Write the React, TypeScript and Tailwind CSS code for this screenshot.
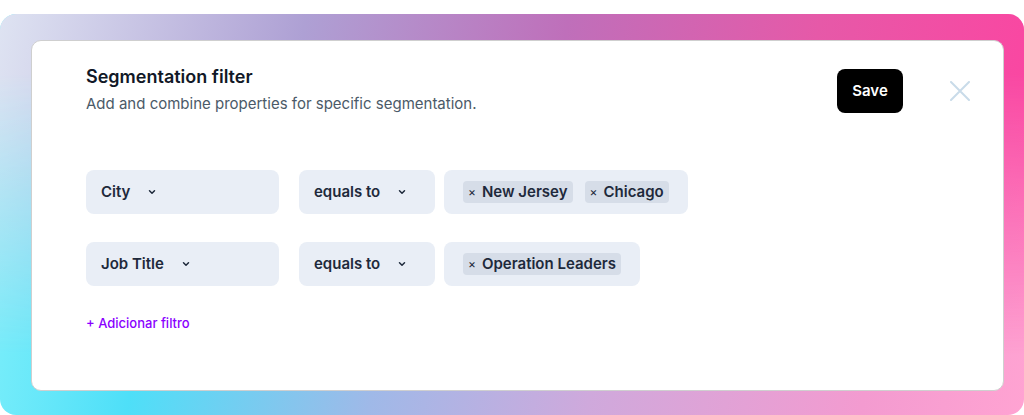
import React from "react";

const rows = [
  { field: "City", op: "equals to", values: ["New Jersey", "Chicago"] },
  { field: "Job Title", op: "equals to", values: ["Operation Leaders"] },
];

const Chevron = () => (
  <svg width="10" height="10" viewBox="0 0 10 10" fill="none" className="shrink-0">
    <path d="M2.5 3.8 5 6.2 7.5 3.8" stroke="#1e293b" strokeWidth="1.5" strokeLinecap="round" strokeLinejoin="round" />
  </svg>
);

const Select = ({ label, className }: { label: string; className: string }) => (
  <div className={`${className} h-[44px] rounded-lg bg-[#e9eef6] flex items-center gap-[17px] pl-[15px] text-[15px] font-semibold text-[#1e293b]`}>
    <span>{label}</span>
    <Chevron />
  </div>
);

const Chip = ({ text }: { text: string }) => (
  <div className="h-[22px] rounded-[4px] bg-[#d6dde8] flex items-center gap-[6px] pl-[5px] pr-[5px] text-[15px] font-semibold text-[#1e293b]">
    <span className="text-[12px] font-normal leading-none">×</span>
    <span>{text}</span>
  </div>
);

export default function App() {
  return (
    <div className="pt-[14px] font-['Inter',sans-serif]">
      <div className="relative h-[401px] rounded-[16px] overflow-hidden bg-[linear-gradient(100deg,#86f2fb_0%,#4edff8_18%,#9fb9e8_40%,#cfa9dc_60%,#f39bd0_85%,#ffa3d2_100%)]">
        <div className="absolute inset-0 bg-[linear-gradient(100deg,#dee3f2_0%,#aea0d4_28%,#bf6fba_52%,#e659a8_75%,#ff42a0_100%)] [mask-image:linear-gradient(to_bottom,black_15%,transparent_85%)]" />
        <div className="relative ml-[31px] mr-[20px] mt-[26px] h-[351px] rounded-[10px] border border-[#cfcfcf] bg-white pl-[54px] pr-[33px] pt-[24px]">
          <div className="flex items-start justify-between">
            <div>
              <h1 className="text-[18px] leading-[24px] font-semibold text-[#111827]">Segmentation filter</h1>
              <p className="mt-[5px] text-[15px] leading-[20px] text-[#4b5a68]">
                Add and combine properties for specific segmentation.
              </p>
            </div>
            <div className="flex items-center gap-[47px] mt-[4px]">
              <button className="h-[44px] w-[66px] rounded-lg bg-black text-white text-[15px] font-semibold">Save</button>
              <svg width="20" height="20" viewBox="0 0 20 20" fill="none">
                <path d="M1 1 19 19M19 1 1 19" stroke="#c9dbe9" strokeWidth="2" strokeLinecap="round" />
              </svg>
            </div>
          </div>
          <div className="mt-[56px] flex flex-col gap-[28px]">
            {rows.map((r) => (
              <div key={r.field} className="flex items-center">
                <Select label={r.field} className="w-[193px]" />
                <Select label={r.op} className="w-[136px] ml-[20px]" />
                <div className="ml-[9px] h-[44px] rounded-lg bg-[#e9eef6] flex items-center gap-[12px] pl-[19px] pr-[19px]">
                  {r.values.map((v) => (
                    <Chip key={v} text={v} />
                  ))}
                </div>
              </div>
            ))}
          </div>
          <div className="mt-[27px] text-[13px] leading-[20px] font-medium text-[#8a00ff]">+ Adicionar filtro</div>
        </div>
      </div>
    </div>
  );
}
